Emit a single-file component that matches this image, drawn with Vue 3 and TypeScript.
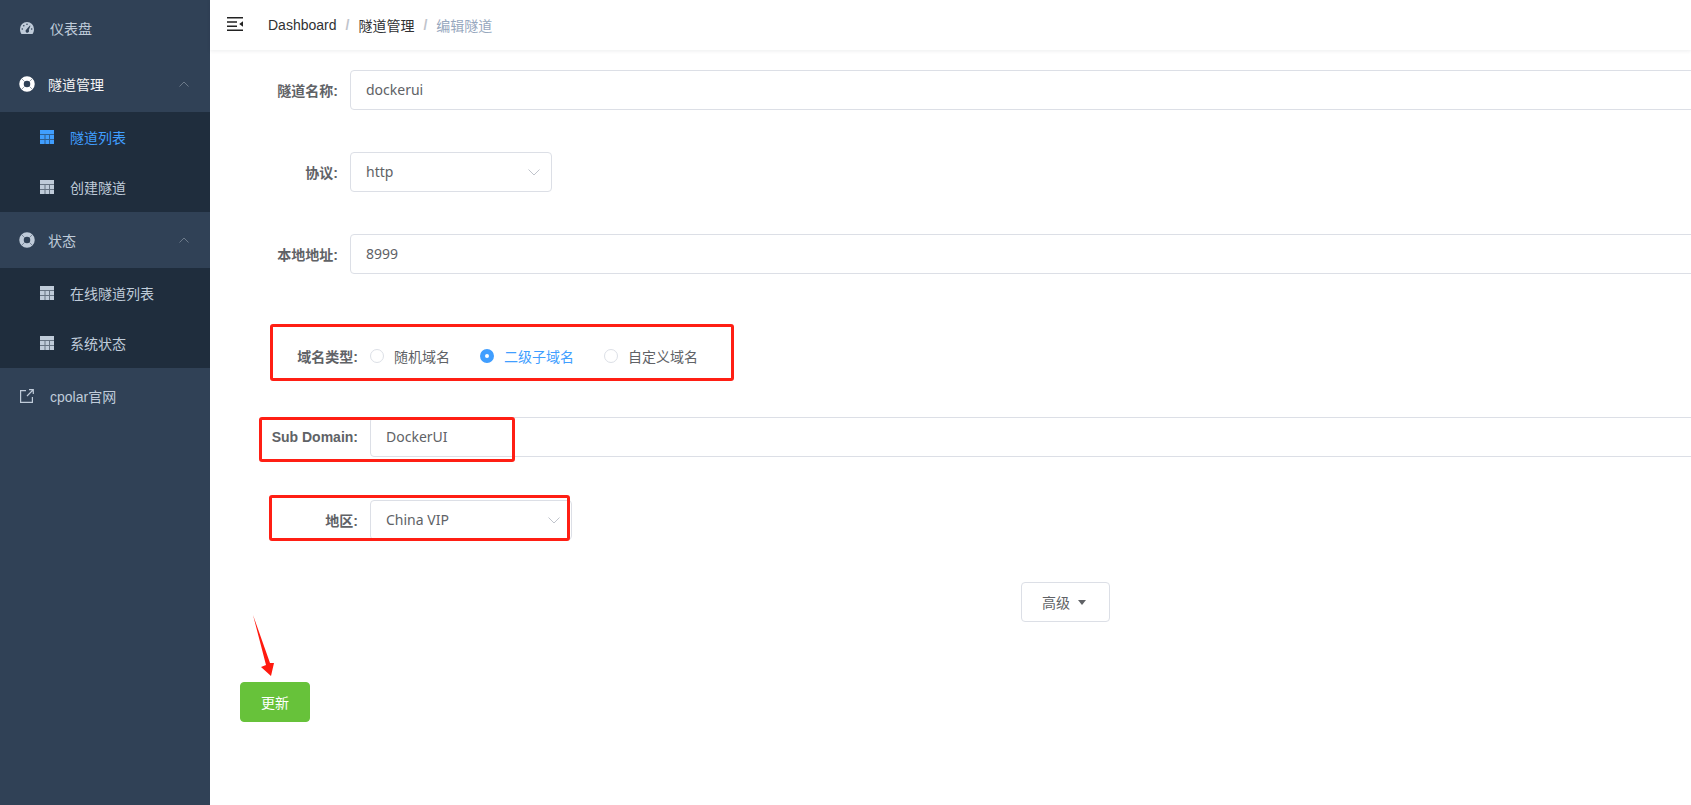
<script setup lang="ts">
interface SubItem { label: string; active?: boolean }
const tunnelItems: SubItem[] = [{ label: '隧道列表', active: true }, { label: '创建隧道' }]
const statusItems: SubItem[] = [{ label: '在线隧道列表' }, { label: '系统状态' }]
const radios = [
  { label: '随机域名', checked: false },
  { label: '二级子域名', checked: true },
  { label: '自定义域名', checked: false },
]
</script>

<template>
  <div class="page">
    <aside class="sidebar">
      <div class="menu-item plain">
        <svg class="icon" viewBox="0 0 14 12" width="14" height="12"><path fill="#bfcbd9" d="M7 0a7 7 0 0 0-7 7c0 1.900.5 3.600 1.500 5h11C13.500 10.600 14 8.900 14 7a7 7 0 0 0-7-7zM2.300 7.800a.8.8 0 1 1 0-1.600.8.8 0 0 1 0 1.600zm1.500-3.300a.8.8 0 1 1 0-1.600.8.8 0 0 1 0 1.600zM7 3a.8.8 0 1 1 0-1.600A.8.8 0 0 1 7 3zm1 7.500a1.700 1.700 0 0 1-2.300-2.200L9.900 3.400l.6.300L8.700 7.900c.5.600.6 1.900-.7 2.600zm3.700-2.700a.8.8 0 1 1 0-1.600.8.8 0 0 1 0 1.600z"/></svg>
        <span>仪表盘</span>
      </div>

      <div class="menu-item group open">
        <svg class="icon" viewBox="0 0 16 16" width="16" height="16"><circle cx="8" cy="8" r="5.500" fill="none" stroke="#fff" stroke-width="4.500"/><path d="M5.600 5.600 2.700 2.700M10.400 5.600l2.900-2.900M5.600 10.400l-2.900 2.900M10.400 10.400l2.900 2.900" stroke="#304156" stroke-width=".7" opacity=".7"/></svg>
        <span>隧道管理</span>
        <svg class="chev" viewBox="0 0 10 6" width="10" height="6"><path d="M.5 5.500 5 1l4.500 4.500" fill="none" stroke="#6c7a8a" stroke-width="1"/></svg>
      </div>
      <ul class="submenu">
        <li v-for="it in tunnelItems" :key="it.label" class="sub-item" :class="{ active: it.active }">
          <svg class="grid-icon" viewBox="0 0 14 14" width="14" height="14"><path fill="currentColor" d="M0 0h14v14H0z"/><path fill="#1f2d3d" d="M0 4h14v1H0zM0 9h14v1H0zM4.500 4h1v10h-1zM9 4h1v10H9z" opacity=".55"/></svg>
          <span>{{ it.label }}</span>
        </li>
      </ul>

      <div class="menu-item group">
        <svg class="icon" viewBox="0 0 16 16" width="16" height="16"><circle cx="8" cy="8" r="5.500" fill="none" stroke="#bfcbd9" stroke-width="4.500"/><path d="M5.600 5.600 2.700 2.700M10.400 5.600l2.900-2.900M5.600 10.400l-2.900 2.900M10.400 10.400l2.900 2.900" stroke="#304156" stroke-width=".7" opacity=".7"/></svg>
        <span>状态</span>
        <svg class="chev" viewBox="0 0 10 6" width="10" height="6"><path d="M.5 5.500 5 1l4.500 4.500" fill="none" stroke="#6c7a8a" stroke-width="1"/></svg>
      </div>
      <ul class="submenu">
        <li v-for="it in statusItems" :key="it.label" class="sub-item">
          <svg class="grid-icon" viewBox="0 0 14 14" width="14" height="14"><path fill="currentColor" d="M0 0h14v14H0z"/><path fill="#1f2d3d" d="M0 4h14v1H0zM0 9h14v1H0zM4.500 4h1v10h-1zM9 4h1v10H9z" opacity=".55"/></svg>
          <span>{{ it.label }}</span>
        </li>
      </ul>

      <div class="menu-item plain">
        <svg class="icon" viewBox="0 0 14 14" width="14" height="14"><path fill="none" stroke="#bfcbd9" stroke-width="1.200" d="M6 1.600H.6v11.800h11.800V8M7 7l6-6M9 .7h4.300V5"/></svg>
        <span>cpolar官网</span>
      </div>
    </aside>

    <main class="main">
      <header class="navbar">
        <svg class="hamburger" viewBox="0 0 16 14" width="16" height="14"><path fill="#222" d="M0 0h16v1.500H0zM0 4.200h10v1.500H0zM0 8.400h10v1.500H0zM0 12.500h16V14H0zM16 4.200v5.500l-3.800-2.750z"/></svg>
        <nav class="crumbs">
          <span class="crumb">Dashboard</span><span class="sep">/</span>
          <span class="crumb">隧道管理</span><span class="sep">/</span>
          <span class="crumb last">编辑隧道</span>
        </nav>
      </header>

      <form class="form" @submit.prevent>
        <div class="row r1">
          <label class="label">隧道名称:</label>
          <div class="input">dockerui</div>
        </div>
        <div class="row r2">
          <label class="label">协议:</label>
          <div class="input select">http
            <svg class="arrow" viewBox="0 0 12 7" width="12" height="7"><path d="M.5.500 6 6 11.500.5" fill="none" stroke="#c0c4cc"/></svg>
          </div>
        </div>
        <div class="row r2">
          <label class="label">本地地址:</label>
          <div class="input">8999</div>
        </div>
        <div class="row wide r4">
          <label class="label">域名类型:</label>
          <div class="radios">
            <div v-for="r in radios" :key="r.label" class="radio" :class="{ checked: r.checked }">
              <span class="dot"></span><span>{{ r.label }}</span>
            </div>
          </div>
        </div>
        <div class="row wide r5">
          <label class="label">Sub Domain:</label>
          <div class="input">DockerUI</div>
        </div>
        <div class="row wide r6">
          <label class="label">地区:</label>
          <div class="input select">China VIP
            <svg class="arrow" viewBox="0 0 12 7" width="12" height="7"><path d="M.5.500 6 6 11.500.5" fill="none" stroke="#c0c4cc"/></svg>
          </div>
        </div>
        <button type="button" class="adv">高级<span class="caret"></span></button>
        <button type="button" class="submit">更新</button>
      </form>

      <div class="mark m1"></div>
      <div class="mark m2"></div>
      <div class="mark m3"></div>
      <svg class="pointer" viewBox="0 0 30 70" width="30" height="70"><polygon fill="#ff1a0f" points="3,5 20,53 24,53 21,66 11,57 16,55"/></svg>
    </main>
  </div>
</template>

<style>
html, body { margin: 0; height: 100%; overflow: hidden; background: #fff; }
</style>

<style scoped>
.page {
  display: flex;
  width: 1691px;
  height: 805px;
  overflow: hidden;
  font-family: "Liberation Sans", "Noto Sans CJK SC", sans-serif;
  font-size: 14px;
  color: #606266;
}
.sidebar { width: 210px; flex: none; background: #304156; color: #bfcbd9; }
.menu-item { position: relative; display: flex; align-items: center; height: 56px; }
.menu-item.plain { padding-left: 20px; }
.menu-item.plain .icon { margin-right: 16px; }
.menu-item.group { padding-left: 19px; }
.menu-item.group .icon { margin-right: 13px; }
.menu-item.open { color: #f4f4f5; }
.chev { position: absolute; left: 179px; top: 25px; }
.submenu { list-style: none; margin: 0; padding: 0; background: #1f2d3d; }
.sub-item { display: flex; align-items: center; height: 50px; padding-left: 40px; }
.sub-item .grid-icon { margin-right: 16px; color: #bfcbd9; }
.sub-item.active, .sub-item.active .grid-icon { color: #409eff; }

.main { position: relative; flex: 1; min-width: 0; }
.navbar {
  display: flex;
  align-items: center;
  height: 50px;
  box-shadow: 0 1px 4px rgba(0, 21, 41, .08);
}
.hamburger { margin: 0 0 2px 17px; }
.crumbs { margin-left: 25px; display: flex; align-items: center; color: #303133; }
.sep { margin: 0 9px; color: #c0c4cc; font-weight: 700; }
.crumb.last { color: #97a8be; }

.form { padding-top: 20px; width: 1700px; }
.row { display: flex; align-items: center; height: 40px; }
.r2 { margin-top: 42px; }
.r4 { margin-top: 62px; }
.r5 { margin-top: 41px; }
.r6 { margin-top: 43px; }
.label { width: 140px; flex: none; box-sizing: border-box; padding-right: 12px; text-align: right; font-weight: 700; color: #606266; }
.wide .label { width: 160px; }
.input {
  position: relative;
  flex: 1;
  box-sizing: border-box;
  height: 40px;
  line-height: 38px;
  padding: 0 15px;
  border: 1px solid #dcdfe6;
  border-radius: 4px;
  font-family: "Noto Sans", "Noto Sans CJK SC", sans-serif;
}
.select { flex: none; width: 202px; }
.arrow { position: absolute; right: 11px; top: 16px; }
.radios { display: flex; }
.radio { display: flex; align-items: center; margin-right: 30px; color: #606266; }
.dot {
  box-sizing: border-box;
  width: 14px;
  height: 14px;
  margin-right: 10px;
  border: 1px solid #dcdfe6;
  border-radius: 50%;
}
.radio.checked { color: #409eff; }
.radio.checked .dot { border: 5px solid #409eff; background: #fff; }

.adv {
  display: flex;
  align-items: center;
  box-sizing: border-box;
  width: 89px;
  height: 40px;
  margin: 42px 0 0 811px;
  padding: 0 0 0 20px;
  background: #fff;
  border: 1px solid #dcdfe6;
  border-radius: 4px;
  font: inherit;
  color: #606266;
}
.caret {
  width: 0;
  height: 0;
  margin-left: 8px;
  border-left: 4.500px solid transparent;
  border-right: 4.500px solid transparent;
  border-top: 5px solid #606266;
}
.submit {
  display: block;
  width: 70px;
  height: 40px;
  margin: 60px 0 0 30px;
  padding: 0;
  background: #67c23a;
  border: 1px solid #67c23a;
  border-radius: 4px;
  font: inherit;
  color: #fff;
}

.mark { position: absolute; box-sizing: border-box; border: 3px solid #ff1f14; border-radius: 3px; }
.m1 { left: 60px; top: 324px; width: 464px; height: 57px; }
.m2 { left: 49px; top: 417px; width: 256px; height: 45px; }
.m3 { left: 59px; top: 495px; width: 301px; height: 46px; }
.pointer { position: absolute; left: 40px; top: 610px; }
</style>
